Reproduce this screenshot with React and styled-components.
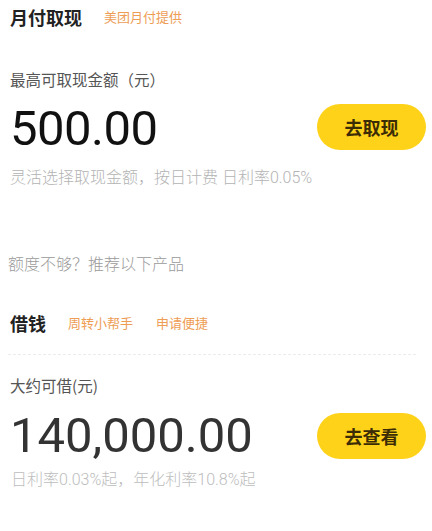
import React from "react";
import styled, { createGlobalStyle } from "styled-components";

const Global = createGlobalStyle`
  html, body { margin: 0; padding: 0; background: #fff; }
  body { font-family: "Noto Sans CJK SC", "Noto Sans", sans-serif; }
`;

const Page = styled.div`
  width: 432px;
  height: 531px;
  box-sizing: border-box;
  padding: 0 6px 0 10px;
  background: #fff;
  overflow: hidden;
`;

const Header = styled.div`
  display: flex;
  align-items: center;
  height: 24px;
  margin-top: ${(p) => p.$top}px;
  gap: 22px;
`;

const Title = styled.div`
  font-size: 18px;
  font-weight: 700;
  color: #222;
  line-height: 24px;
`;

const Tags = styled.div`
  display: flex;
  gap: 23px;
`;

const Tag = styled.span`
  font-size: 13px;
  color: #ee9d55;
  line-height: 18px;
`;

const Label = styled.div`
  font-size: 15.5px;
  color: #555;
  line-height: 20px;
  margin-top: ${(p) => p.$top}px;
`;

const AmountRow = styled.div`
  display: flex;
  align-items: center;
  justify-content: space-between;
  height: 47px;
  margin-top: ${(p) => p.$top}px;
`;

const Amount = styled.div`
  font-family: Roboto, "Liberation Sans", sans-serif;
  font-size: 49px;
  font-weight: 400;
  color: ${(p) => p.$color};
  line-height: 47px;
  letter-spacing: ${(p) => p.$spacing}px;
  padding-top: ${(p) => p.$shift}px;
`;

const Button = styled.button`
  width: 109px;
  height: 46px;
  border: none;
  border-radius: 23px;
  background: #ffd21a;
  color: #3b2c05;
  font-family: "Noto Sans CJK SC", sans-serif;
  font-size: 18px;
  font-weight: 700;
  padding: 0;
  cursor: pointer;
`;

const Desc = styled.div`
  font-family: Roboto, "Noto Sans CJK SC", sans-serif;
  font-size: 16px;
  font-weight: 300;
  color: ${(p) => p.$color || "#b3b3b3"};
  line-height: 20px;
  margin-top: ${(p) => p.$top}px;
  margin-left: ${(p) => p.$left || 0}px;
  white-space: nowrap;
`;

const Divider = styled.div`
  margin-top: ${(p) => p.$top}px;
  margin-left: -2px;
  width: 408px;
  border-top: 1px dashed #ececec;
`;

export default function App() {
  return (
    <Page>
      <Global />
      <Header $top={5}>
        <Title>月付取现</Title>
        <Tags>
          <Tag>美团月付提供</Tag>
        </Tags>
      </Header>
      <Label $top={40}>最高可取现金额（元）</Label>
      <AmountRow $top={14}>
        <Amount $color="#111" $shift={4} $spacing={-0.5}>500.00</Amount>
        <Button>去取现</Button>
      </AmountRow>
      <Desc $top={18}>灵活选择取现金额，按日计费 日利率0.05%</Desc>
      <Desc $top={67} $left={-2} $color="#9a9a9a">额度不够？推荐以下产品</Desc>
      <Header $top={36}>
        <Title>借钱</Title>
        <Tags>
          <Tag>周转小帮手</Tag>
          <Tag>申请便捷</Tag>
        </Tags>
      </Header>
      <Divider $top={19} />
      <Label $top={20}>大约可借(元)</Label>
      <AmountRow $top={17}>
        <Amount $color="#333" $shift={0} $spacing={0}>140,000.00</Amount>
        <Button>去查看</Button>
      </AmountRow>
      <Desc $top={11} $left={1} $color="#bdbdbd">日利率0.03%起，年化利率10.8%起</Desc>
    </Page>
  );
}
